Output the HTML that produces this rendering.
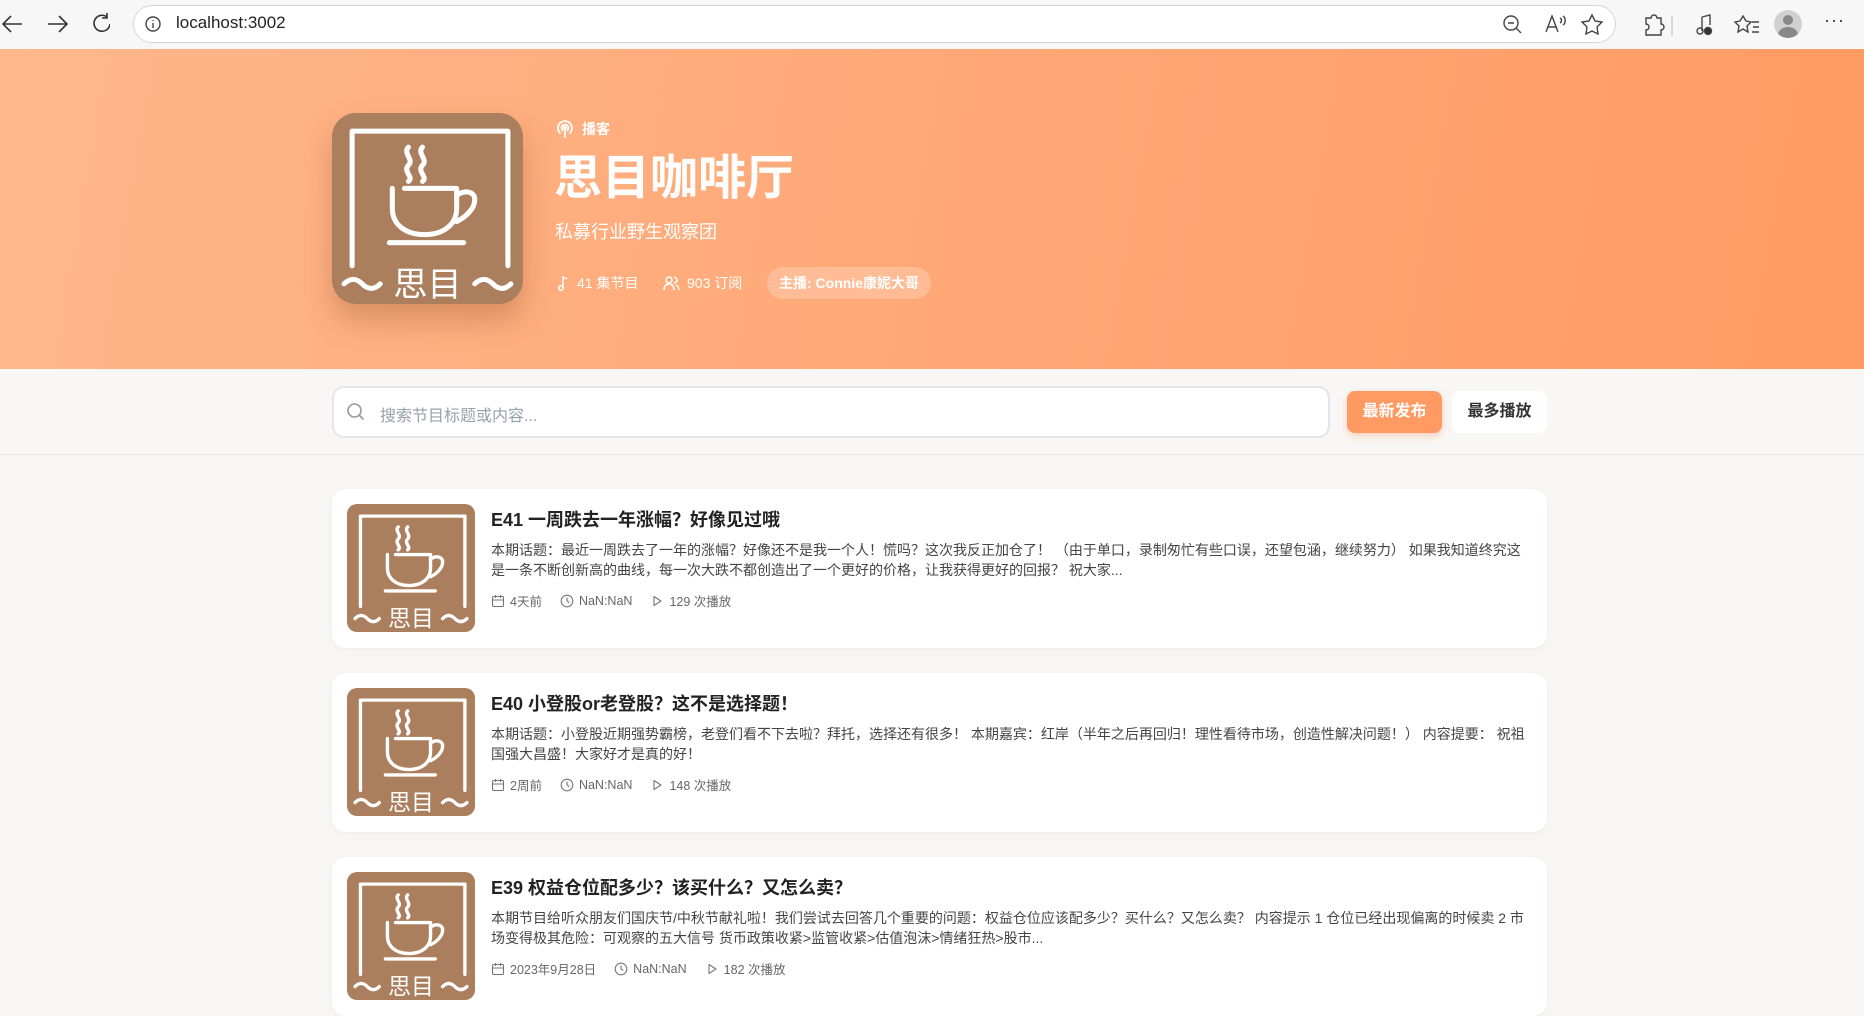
<!DOCTYPE html>
<html><head><meta charset="utf-8"><style>
*{box-sizing:border-box;margin:0;padding:0}
body{width:1864px;height:965px;overflow:hidden;background:#f7f6f4;font-family:"Liberation Sans","Noto Sans CJK SC",sans-serif;position:relative}
.abs{position:absolute}
.bar{left:0;top:0;width:1864px;height:49px;background:#f7f7f7}
.addr{left:133px;top:5px;width:1483px;height:38px;border:1px solid #d6d6d6;border-radius:19px;background:#fff}
.hero{left:0;top:49px;width:1864px;height:320px;background:linear-gradient(100deg,#ffb78c 0%,#ffa877 50%,#ff9b62 100%)}
.logo{border-radius:24px;overflow:hidden;box-shadow:0 16px 30px rgba(150,80,40,.35)}
.w{color:#fff}
.search{left:332px;top:386px;width:998px;height:52px;border:2px solid #e4e4ea;border-radius:12px;background:#fff}
.btn{top:391px;height:42px;border-radius:8px;font-size:16px;font-weight:bold;text-align:center;line-height:42px}
.card{left:332px;width:1215px;height:159px;background:#fff;border-radius:14px;box-shadow:0 1px 4px rgba(0,0,0,.04)}
.card .t{position:absolute;left:159px;top:17px;font-size:18px;font-weight:bold;color:#222}
.card .d{position:absolute;left:159px;top:51px;width:1040px;font-size:14px;line-height:20px;color:#444}
.card .m{position:absolute;left:159px;top:102px;font-size:12.5px;color:#666;display:flex;gap:18px;align-items:center}
.card .m span{display:flex;align-items:center;gap:5px}
.card .th{position:absolute;left:15px;top:15px;border-radius:10px;overflow:hidden}
</style></head><body>
<svg width="0" height="0" style="position:absolute"><defs>
<symbol id="lg" viewBox="0 0 190 190">
<rect width="190" height="190" fill="#ab7f5e"/>
<g fill="none" stroke="#fff" stroke-width="5" stroke-linecap="round" stroke-linejoin="round">
<path d="M20 152V18H175V152"/>
<path d="M76 34c-6 6 6 12 0 18s6 12 0 16M90 34c-6 6 6 12 0 18s6 12 0 16"/>
<path d="M60 75v20c0 15 12 26 32 26s32-11 32-26V75H72"/>
<path d="M124 82c8-6 18-4 18 4 0 10-10 18-18 22"/>
<path d="M57 129H131"/>
<path d="M12 170c6-6 12-6 18 0s12 6 18 0M142 170c6-6 12-6 18 0s12 6 18 0"/>
</g>
<text x="95" y="182" font-size="34" fill="#fff" text-anchor="middle" font-family="Noto Sans CJK SC,sans-serif">思目</text>
</symbol>
<symbol id="cal" viewBox="0 0 14 14"><g fill="none" stroke="#777" stroke-width="1.1"><rect x="1.5" y="2.5" width="11" height="10" rx="1"/><path d="M1.5 6h11M4.5 1v3M9.5 1v3"/></g></symbol>
<symbol id="clk" viewBox="0 0 14 14"><g fill="none" stroke="#777" stroke-width="1.1"><circle cx="7" cy="7" r="5.8"/><path d="M7 3.5V7l2.3 1.5"/></g></symbol>
<symbol id="ply" viewBox="0 0 14 14"><path d="M4 2.5l7 4.5-7 4.5z" fill="none" stroke="#777" stroke-width="1.1" stroke-linejoin="round"/></symbol>
</defs></svg>

<div class="abs bar"></div>
<svg class="abs" style="left:0;top:10px" width="110" height="30" fill="none" stroke="#333" stroke-width="1.6"><path d="M22 14H4M11 6l-8 8 8 8"/><path d="M48 14h18M59 6l8 8-8 8"/><path d="M110 14a8 8 0 1 1-3-7M107 3v5h-5"/></svg>
<div class="abs addr"></div>
<svg class="abs" style="left:144px;top:15px" width="18" height="18" fill="none" stroke="#444" stroke-width="1.4"><circle cx="9" cy="9" r="7"/><path d="M9 8v5M9 5v1"/></svg>
<div class="abs" style="left:176px;top:13px;font-size:17px;color:#222">localhost:3002</div>
<svg class="abs" style="left:1500px;top:12px" width="350" height="26" fill="none" stroke="#444" stroke-width="1.4"><circle cx="11" cy="11" r="7"/><path d="M16 16l5 5M8 11h6"/><path d="M46 20l6-16 6 16M48 15h8M60 6c2 1 2 4 0 5M63 4c3 2 3 7 0 9"/><path d="M92 3l3 6 7 1-5 5 1 7-6-3-6 3 1-7-5-5 7-1z"/><path d="M146 6h5a3 3 0 0 1 6 0h4v6a3 3 0 0 1 0 6v5h-15v-5a3 3 0 0 0 0-6z"/><path d="M172 4v20" stroke="#ccc"/><path d="M202 5v14M202 5l8-2v10"/><circle cx="200" cy="19" r="3"/><circle cx="208" cy="19" r="3.5" fill="#333"/><path d="M243 4l3 5 5 1-4 4 1 6-5-3-5 3 1-6-4-4 5-1zM252 10h7M253 15h6M252 20h7"/></svg>
<div class="abs" style="left:1774px;top:10px;width:28px;height:28px;border-radius:50%;background:#d0d0d0;overflow:hidden"><div style="position:absolute;left:9px;top:5px;width:10px;height:10px;border-radius:50%;background:#888"></div><div style="position:absolute;left:4px;top:17px;width:20px;height:16px;border-radius:50%;background:#888"></div></div>
<div class="abs" style="left:1824px;top:10px;font-size:18px;color:#333;letter-spacing:1px">···</div>

<div class="abs hero"></div>
<svg class="abs logo" style="left:332px;top:113px" width="191" height="191"><use href="#lg"/></svg>
<svg class="abs" style="left:555px;top:119px" width="20" height="20" fill="none" stroke="#fff" stroke-width="1.8" stroke-linecap="round"><path d="M5 14a7 7 0 1 1 10 0M7.5 11.5a3.5 3.5 0 1 1 5 0"/><circle cx="10" cy="9" r="1.2" fill="#fff"/><path d="M10 12v6"/></svg>
<div class="abs w" style="left:582px;top:119px;font-size:14px;font-weight:bold">播客</div>
<div class="abs w" style="left:554px;top:149px;font-size:48px;font-weight:bold;line-height:60px">思目咖啡厅</div>
<div class="abs" style="left:555px;top:218px;font-size:18px;color:#fff">私募行业野生观察团</div>
<svg class="abs" style="left:555px;top:274px" width="18" height="18" fill="none" stroke="#fff" stroke-width="1.5"><path d="M8 14V3l4 2"/><circle cx="6" cy="14" r="2.2"/></svg>
<div class="abs w" style="left:577px;top:273px;font-size:14px">41 集节目</div>
<svg class="abs" style="left:662px;top:274px" width="18" height="18" fill="none" stroke="#fff" stroke-width="1.5"><circle cx="7" cy="6" r="3"/><path d="M2 16c0-4 2-6 5-6s5 2 5 6M12 3a3 3 0 0 1 0 6M14 11c2 1 3 3 3 5"/></svg>
<div class="abs w" style="left:687px;top:273px;font-size:14px">903 订阅</div>
<div class="abs w" style="left:767px;top:267px;width:164px;height:32px;border-radius:16px;background:rgba(255,255,255,.22);font-size:14px;font-weight:bold;text-align:center;line-height:32px">主播: Connie康妮大哥</div>

<div class="abs" style="left:0;top:369px;width:1864px;height:86px;background:#f8f7f5;border-bottom:1px solid #e6e5e3"></div>
<div class="abs search"></div>
<svg class="abs" style="left:346px;top:402px" width="20" height="20" fill="none" stroke="#999" stroke-width="1.6"><circle cx="8.5" cy="8.5" r="6.5"/><path d="M13.5 13.5l4 4"/></svg>
<div class="abs" style="left:380px;top:402px;font-size:16px;color:#9aa0aa">搜索节目标题或内容...</div>
<div class="abs btn" style="left:1347px;width:95px;background:#ff9a62;color:#fff;box-shadow:0 3px 8px rgba(255,140,80,.35)">最新发布</div>
<div class="abs btn" style="left:1452px;width:95px;background:#fff;color:#333">最多播放</div>

<div class="abs card" style="top:489px">
<svg class="th" width="128" height="128"><use href="#lg"/></svg>
<div class="t">E41 一周跌去一年涨幅？好像见过哦</div>
<div class="d">本期话题：最近一周跌去了一年的涨幅？好像还不是我一个人！慌吗？这次我反正加仓了！ （由于单口，录制匆忙有些口误，还望包涵，继续努力） 如果我知道终究这是一条不断创新高的曲线，每一次大跌不都创造出了一个更好的价格，让我获得更好的回报？ 祝大家...</div>
<div class="m"><span><svg width="14" height="14"><use href="#cal"/></svg>4天前</span><span><svg width="14" height="14"><use href="#clk"/></svg>NaN:NaN</span><span><svg width="14" height="14"><use href="#ply"/></svg>129 次播放</span></div>
</div>
<div class="abs card" style="top:673px">
<svg class="th" width="128" height="128"><use href="#lg"/></svg>
<div class="t">E40 小登股or老登股？这不是选择题！</div>
<div class="d">本期话题：小登股近期强势霸榜，老登们看不下去啦？拜托，选择还有很多！ 本期嘉宾：红岸（半年之后再回归！理性看待市场，创造性解决问题！） 内容提要： 祝祖国强大昌盛！大家好才是真的好！</div>
<div class="m"><span><svg width="14" height="14"><use href="#cal"/></svg>2周前</span><span><svg width="14" height="14"><use href="#clk"/></svg>NaN:NaN</span><span><svg width="14" height="14"><use href="#ply"/></svg>148 次播放</span></div>
</div>
<div class="abs card" style="top:857px">
<svg class="th" width="128" height="128"><use href="#lg"/></svg>
<div class="t">E39 权益仓位配多少？该买什么？又怎么卖？</div>
<div class="d">本期节目给听众朋友们国庆节/中秋节献礼啦！我们尝试去回答几个重要的问题：权益仓位应该配多少？买什么？又怎么卖？ 内容提示 1 仓位已经出现偏离的时候卖 2 市场变得极其危险：可观察的五大信号 货币政策收紧&gt;监管收紧&gt;估值泡沫&gt;情绪狂热&gt;股市...</div>
<div class="m"><span><svg width="14" height="14"><use href="#cal"/></svg>2023年9月28日</span><span><svg width="14" height="14"><use href="#clk"/></svg>NaN:NaN</span><span><svg width="14" height="14"><use href="#ply"/></svg>182 次播放</span></div>
</div>
</body></html>
